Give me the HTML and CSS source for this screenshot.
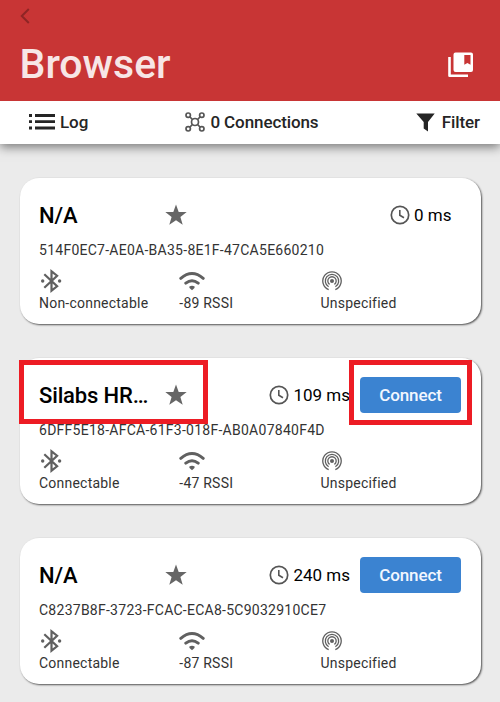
FILE: index.html
```html
<!DOCTYPE html>
<html lang="en">
<head>
<meta charset="utf-8">
<title>Browser</title>
<link rel="stylesheet" href="styles.css">
</head>
<body>
<svg class="defs" aria-hidden="true">
  <symbol id="star" viewBox="0 0 22 22"><path d="M11 0.5l2.7 7.4 8 .2-6.300 4.900 2.300 7.700L11 16.300l-6.700 4.400 2.300-7.700L.3 8.100l8-.2z"/></symbol>
  <symbol id="clock" viewBox="0 0 20 20"><g fill="none" stroke="currentColor"><circle cx="10" cy="10" r="8.700" stroke-width="1.700"/><path d="M9.800 5v5.300l4.200 2.500" stroke-width="1.600"/></g></symbol>
  <symbol id="bluetooth" viewBox="0 0 22 24"><path d="M3.300 5.300l12.800 12-5.600 4.400V2.300l5.600 4.400L3.300 18.700" fill="none" stroke="currentColor" stroke-width="2.200"/><circle cx="1.700" cy="12" r="1.700"/><circle cx="18.600" cy="12" r="1.700"/></symbol>
  <symbol id="wifi" viewBox="0 0 26 20"><path d="M1.800 7.300Q13-2.200 24.200 7.300M6.800 12.100Q13 7.300 19.200 12.100" fill="none" stroke="currentColor" stroke-width="3" stroke-linecap="round"/><path d="M10.100 15.700Q13 14 15.900 15.700 15.900 17 13 19.200 10.100 17 10.100 15.700z"/></symbol>
  <symbol id="beacon" viewBox="0 0 20 20"><g fill="none" stroke="currentColor" stroke-width="1.300"><path d="M6.700 18.600A9.200 9.200 0 1 1 13.300 18.600"/><path d="M6.600 15.800A6.700 6.700 0 1 1 13.400 15.800"/><path d="M7.600 13.400A4.200 4.200 0 1 1 12.400 13.400"/></g><circle cx="10" cy="10" r="2"/></symbol>
</svg>

<header class="header">
  <svg class="back" viewBox="0 0 10 16"><path d="M8.800 1L1.800 8l7 7"/></svg>
  <div class="title-row">
    <h1>Browser</h1>
    <svg class="bookmarks" viewBox="0 0 26 26"><path fill-rule="evenodd" d="M7.500.5h15.500a2 2 0 0 1 2 2v15.500a2 2 0 0 1-2 2H7.500a2 2 0 0 1-2-2V2.500a2 2 0 0 1 2-2zM16.300 3v9.800l3.100-1.900 3.100 1.900V3z"/><path d="M1.500 5v18.700H20" fill="none" stroke="#fff" stroke-width="2.600" stroke-linejoin="round"/></svg>
  </div>
</header>

<nav class="tabs">
  <div class="tab tab-log">
    <svg class="list-icon" viewBox="0 0 26 16"><path d="M0 1.500h3M0 7.700h3M0 14h3M6 1.500h20M6 7.700h20M6 14h20"/></svg>
    <span>Log</span>
  </div>
  <div class="tab tab-connections">
    <svg class="nodes-icon" viewBox="0 0 20 20"><circle cx="10" cy="10" r="3.500"/><circle cx="3.200" cy="3.200" r="2.200"/><circle cx="16.800" cy="3.200" r="2.200"/><circle cx="3.200" cy="16.800" r="2.200"/><circle cx="16.800" cy="16.800" r="2.200"/><path d="M5 5l2.300 2.300M15 5l-2.300 2.300M5 15l2.300-2.300M15 15l-2.300-2.300"/></svg>
    <span>0 Connections</span>
  </div>
  <div class="tab tab-filter">
    <svg class="funnel-icon" viewBox="0 0 19 19"><path d="M.3.500h18.400L12 9v9.500L7.700 15.500V9z"/></svg>
    <span>Filter</span>
  </div>
</nav>

<main class="list">
  <article class="card">
    <div class="top">
      <h2>N/A</h2>
      <svg class="star"><use href="#star"/></svg>
      <div class="latency latency-end"><svg><use href="#clock"/></svg><span>0 ms</span></div>
    </div>
    <p class="uuid">514F0EC7-AE0A-BA35-8E1F-47CA5E660210</p>
    <div class="details">
      <div><svg class="bluetooth"><use href="#bluetooth"/></svg><span>Non-connectable</span></div>
      <div><svg class="wifi"><use href="#wifi"/></svg><span>-89 RSSI</span></div>
      <div><svg class="beacon"><use href="#beacon"/></svg><span>Unspecified</span></div>
    </div>
  </article>

  <article class="card">
    <div class="top">
      <h2>Silabs HR…</h2>
      <svg class="star"><use href="#star"/></svg>
      <div class="latency"><svg><use href="#clock"/></svg><span>109 ms</span></div>
      <button class="connect">Connect</button>
    </div>
    <p class="uuid">6DFF5E18-AFCA-61F3-018F-AB0A07840F4D</p>
    <div class="details">
      <div><svg class="bluetooth"><use href="#bluetooth"/></svg><span>Connectable</span></div>
      <div><svg class="wifi"><use href="#wifi"/></svg><span>-47 RSSI</span></div>
      <div><svg class="beacon"><use href="#beacon"/></svg><span>Unspecified</span></div>
    </div>
    <div class="highlight highlight-name"></div>
    <div class="highlight highlight-connect"></div>
  </article>

  <article class="card">
    <div class="top">
      <h2>N/A</h2>
      <svg class="star"><use href="#star"/></svg>
      <div class="latency"><svg><use href="#clock"/></svg><span>240 ms</span></div>
      <button class="connect">Connect</button>
    </div>
    <p class="uuid">C8237B8F-3723-FCAC-ECA8-5C9032910CE7</p>
    <div class="details">
      <div><svg class="bluetooth"><use href="#bluetooth"/></svg><span>Connectable</span></div>
      <div><svg class="wifi"><use href="#wifi"/></svg><span>-87 RSSI</span></div>
      <div><svg class="beacon"><use href="#beacon"/></svg><span>Unspecified</span></div>
    </div>
  </article>
</main>
</body>
</html>
```
FILE: styles.css
```css
* { box-sizing: border-box; }
body {
  margin: 0;
  height: 702px;
  overflow: hidden;
  background: #ebebeb;
  font-family: Roboto, sans-serif;
  color: #000;
}
svg { display: block; flex: none; fill: currentColor; }
.defs { display: none; }
h1, h2, p { margin: 0; font-weight: 500; white-space: nowrap; }

.header {
  position: relative;
  z-index: 1;
  height: 100.500px;
  margin-bottom: -.5px;
  padding: 8px 26px 0 19.500px;
  background: #c83535;
  color: #fff;
}
.back { width: 10px; height: 16px; fill: none; stroke: #8f2525; stroke-width: 2; }
.title-row { display: flex; justify-content: space-between; margin-top: 17px; }
h1 { font-size: 41px; line-height: 47px; color: #f7e6e6; }
.bookmarks { width: 26px; height: 26px; margin-top: 11px; }

.tabs {
  display: flex;
  justify-content: space-between;
  height: 44px;
  padding: 0 20px 0 29px;
  background: #fff;
  box-shadow: 0 3px 10px rgba(0, 0, 0, .5);
  font-size: 17px;
  font-weight: 500;
  letter-spacing: -.1px;
  color: #252525;
}
.tab { display: flex; align-items: center; white-space: nowrap; }
.list-icon { width: 26px; height: 16px; margin-right: 5px; fill: none; stroke: #252525; stroke-width: 2.8; }
.nodes-icon { width: 20px; height: 20px; margin-right: 5px; fill: none; stroke: #555; stroke-width: 1.7; }
.funnel-icon { width: 19px; height: 19px; margin-right: 7px; }

.list {
  display: flex;
  flex-direction: column;
  gap: 34px;
  padding: 34px 19.500px 0;
}
.card {
  position: relative;
  flex: none;
  height: 146px;
  padding: 19px 19.500px 0;
  border-radius: 19px;
  background: #fff;
  box-shadow: 1px 1px 2px rgba(0, 0, 0, .65);
}
.top { display: flex; align-items: center; height: 36px; }
h2 { width: 126px; padding-top: 1px; font-size: 22px; line-height: 30px; letter-spacing: -.15px; }
.star { width: 22px; height: 22px; color: #666; }
.latency {
  display: flex;
  align-items: center;
  gap: 4px;
  margin-left: auto;
  padding-right: 10px;
  font-size: 17px;
  white-space: nowrap;
}
.latency-end { padding-right: 9.500px; }
.latency svg { width: 20px; height: 20px; color: #555; }
.connect {
  width: 101px;
  height: 36px;
  padding: 0;
  border: 0;
  border-radius: 4px;
  background: #3b83d1;
  font: 500 17px Roboto, sans-serif;
  letter-spacing: -.1px;
  color: #f2f7ff;
}
.uuid { margin-top: 9px; font-size: 14px; font-weight: 400; line-height: 16px; letter-spacing: .26px; color: #333; }
.details {
  display: grid;
  grid-template-columns: 140.300px 141.200px 1fr;
  margin-top: 11px;
  font-size: 14px;
  line-height: 16px;
  letter-spacing: .22px;
  color: #333;
}
.details svg { height: 24px; color: #606060; }
.details span { display: block; padding-top: 2px; white-space: nowrap; }
.details .bluetooth { width: 22px; margin-left: 1.500px; }
.details .wifi { width: 26px; height: 20px; margin: 2px 0; }
.details .beacon { width: 20px; height: 20px; margin: 2px 0 2px 2px; }

.highlight { position: absolute; border: 5px solid #ed1c24; }
.highlight-name { left: -.5px; top: 2px; width: 189px; height: 64px; }
.highlight-connect { left: 329.500px; top: 2px; width: 123px; height: 65px; }
```
